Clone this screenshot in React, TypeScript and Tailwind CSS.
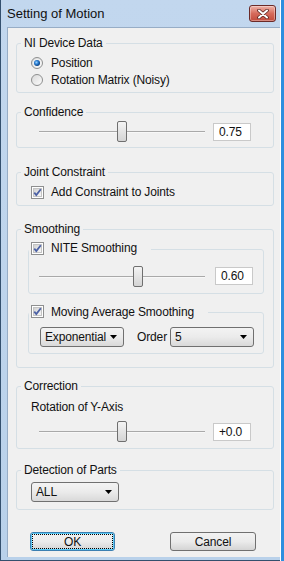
import React from 'react';

function Radio({ checked }: { checked?: boolean }) {
  return (
    <svg width="12" height="12" viewBox="0 0 12 12" className="shrink-0">
      <defs>
        <linearGradient id="rg" x1="0" y1="0" x2="1" y2="1">
          <stop offset="0" stopColor="#d8d8d8" />
          <stop offset="1" stopColor="#fdfdfd" />
        </linearGradient>
        <radialGradient id="rb" cx="0.4" cy="0.4" r="0.6">
          <stop offset="0" stopColor="#9fd4ff" />
          <stop offset="0.5" stopColor="#2a7fd4" />
          <stop offset="1" stopColor="#0c3f7e" />
        </radialGradient>
      </defs>
      <circle cx="6" cy="6" r="5.5" fill="url(#rg)" stroke="#8e8f8f" />
      {checked && <circle cx="6" cy="6" r="3.8" fill="#f4f4f4" />}
      {checked && <circle cx="6" cy="6" r="3" fill="url(#rb)" />}
    </svg>
  );
}

function Check() {
  return (
    <svg width="13" height="13" viewBox="0 0 13 13" className="shrink-0">
      <defs>
        <linearGradient id="cg" x1="0" y1="0" x2="1" y2="1">
          <stop offset="0" stopColor="#cfcfcf" />
          <stop offset="1" stopColor="#fafafa" />
        </linearGradient>
      </defs>
      <rect x="0.5" y="0.5" width="12" height="12" fill="#fff" stroke="#8e8f8f" />
      <rect x="2.5" y="2.5" width="8" height="8" fill="url(#cg)" stroke="#c4c4c4" />
      <path d="M3.3 6.6 L5.3 9 L9.8 3.2" fill="none" stroke="#4c61a5" strokeWidth="1.8" />
    </svg>
  );
}

function Slider({ pct, className = '' }: { pct: number; className?: string }) {
  return (
    <div className={`relative h-[21px] w-[166px] shrink-0 ${className}`}>
      <div className="absolute left-0 right-0 top-[10px] h-[2px] border-t border-b border-t-[#a9a9a9] border-b-[#f8f8f8]" />
      <div
        className="absolute top-0 h-[21px] w-[10px] rounded-[2px] border border-[#6f6f6f] bg-gradient-to-b from-[#f4f4f4] to-[#d4d4d4]"
        style={{ left: Math.round(pct * 156) }}
      />
    </div>
  );
}

function TextBox({ value, className = '' }: { value: string; className?: string }) {
  return (
    <div className={`flex h-[18px] w-[38px] shrink-0 items-center border border-[#c9c9c9] bg-white pl-[5px] text-[12px] leading-[14px] ${className}`}>
      {value}
    </div>
  );
}

function Select({ value, className = '' }: { value: string; className?: string }) {
  return (
    <div className={`flex h-[20px] shrink-0 items-center justify-between rounded-[3px] border border-[#707070] bg-gradient-to-b from-[#f3f3f3] via-[#ebebeb] to-[#d9d9d9] pl-[4px] pr-[6px] text-[12px] leading-[14px] ${className}`}>
      <span>{value}</span>
      <svg width="7" height="4" viewBox="0 0 7 4"><path d="M0 0 H7 L3.5 4 Z" fill="#000" /></svg>
    </div>
  );
}

function Group({ label, className = '', children }: { label: React.ReactNode; className?: string; children: React.ReactNode }) {
  return (
    <fieldset className={`ml-[8px] mr-[6px] rounded-[3px] border border-[#d5dfe5] ${className}`}>
      <legend className="ml-[4px] px-[3px] text-[12px] leading-[14px]">{label}</legend>
      {children}
    </fieldset>
  );
}

function CheckGroup({ label, className = '', children }: { label: string; className?: string; children: React.ReactNode }) {
  return (
    <fieldset className={`ml-[11px] mr-[9px] rounded-[3px] border border-[#d5dfe5] ${className}`}>
      <legend className="ml-0 pl-[2px] pr-[14px] text-[12px] leading-[14px]">
        <span className="inline-flex items-center gap-[7px]">
          <Check />
          {label}
        </span>
      </legend>
      {children}
    </fieldset>
  );
}

export default function App() {
  return (
    <div className="flex h-[561px] w-[284px] font-['Liberation_Sans',Arial,sans-serif] tracking-[-0.15px] text-[#111]">
      <div className="flex flex-1 flex-col border-l border-b border-[#34506e] bg-gradient-to-b from-[#c2d7ee] to-[#b9d1ea]">
        {/* Title bar */}
        <div className="flex h-[27px] shrink-0 items-center justify-between pl-[6px] pr-[4px]">
          <span className="text-[13px] leading-[16px] tracking-normal">Setting of Motion</span>
          <div className="flex h-[17px] w-[27px] items-center justify-center rounded-[3px] border border-[#6b2a28] bg-gradient-to-b from-[#eeb2a8] via-[#d66b5c] to-[#c24a3c] shadow-[inset_0_0_0_1px_rgba(255,255,255,0.35)]">
            <svg width="12" height="10" viewBox="0 0 12 10">
              <path d="M2 1.5 L10 8.5 M10 1.5 L2 8.5" stroke="#5a2420" strokeWidth="3.6" strokeLinecap="round" />
              <path d="M2 1.5 L10 8.5 M10 1.5 L2 8.5" stroke="#fff" strokeWidth="2" strokeLinecap="round" />
            </svg>
          </div>
        </div>

        {/* Client area */}
        <div className="mb-[3px] ml-[6px] flex flex-1 flex-col border-l border-t border-[#97adc6] bg-[#f0f0f0]">
          <Group label="NI Device Data" className="mt-[8px]">
            <div className="pt-[4px] pb-[4px] text-[12px] leading-[14px]">
              <div className="flex h-[17px] items-center gap-[8px] pl-[14px]">
                <Radio checked />
                <span>Position</span>
              </div>
              <div className="flex h-[17px] items-center gap-[8px] pl-[14px]">
                <Radio />
                <span>Rotation Matrix (Noisy)</span>
              </div>
            </div>
          </Group>

          <Group label="Confidence" className="mt-[12px]">
            <div className="flex items-center pt-[2px] pb-[5px]">
              <Slider pct={0.5} className="ml-[22px]" />
              <TextBox value="0.75" className="ml-[8px]" />
            </div>
          </Group>

          <Group label="Joint Constraint" className="mt-[17px]">
            <div className="flex h-[14px] items-center gap-[7px] pl-[14px] mt-[6px] mb-[6px] text-[12px] leading-[14px]">
              <Check />
              <span>Add Constraint to Joints</span>
            </div>
          </Group>

          <Group label="Smoothing" className="mt-[16px]">
            <div className="pt-[5px] pb-[13px]">
              <CheckGroup label="NITE Smoothing">
                <div className="flex items-center pt-[8px] pb-[6px]">
                  <Slider pct={0.6} className="ml-[10px]" />
                  <TextBox value="0.60" className="ml-[10px]" />
                </div>
              </CheckGroup>
              <CheckGroup label="Moving Average Smoothing" className="mt-[11px]">
                <div className="flex items-center pt-[6px] pb-[6px] text-[12px] leading-[14px]">
                  <Select value="Exponential" className="ml-[11px] w-[84px]" />
                  <div className="ml-auto mr-[9px] flex items-center gap-[3px]">
                    <span>Order</span>
                    <Select value="5" className="w-[84px]" />
                  </div>
                </div>
              </CheckGroup>
            </div>
          </Group>

          <Group label="Correction" className="mt-[11px]">
            <div className="pt-[7px] pb-[6px]">
              <div className="pl-[14px] text-[12px] leading-[14px]">Rotation of Y-Axis</div>
              <div className="mt-[7px] flex items-center">
                <Slider pct={0.5} className="ml-[22px]" />
                <TextBox value="+0.0" className="ml-[8px]" />
              </div>
            </div>
          </Group>

          <Group label="Detection of Parts" className="mt-[14px]">
            <div className="pt-[5px] pb-[7px] pl-[14px]">
              <Select value="ALL" className="w-[88px]" />
            </div>
          </Group>

          <div className="mt-[22px] flex text-[12px] leading-[14px]">
            <button className="ml-[22px] flex h-[19px] w-[85px] rounded-[3px] border border-[#3c7fb1] bg-gradient-to-b from-[#f2f2f2] via-[#ebebeb] to-[#d4d4d4] p-[1px] shadow-[inset_0_0_0_1px_#5ccaf5]">
              <span className="flex flex-1 items-center justify-center border border-dotted border-black">OK</span>
            </button>
            <button className="ml-[55px] flex h-[19px] w-[86px] items-center justify-center rounded-[3px] border border-[#707070] bg-gradient-to-b from-[#f2f2f2] via-[#ebebeb] to-[#d4d4d4]">
              Cancel
            </button>
          </div>
        </div>
      </div>
      <div className="w-[4px] border-l border-white bg-[#2f8fdf]" />
    </div>
  );
}
